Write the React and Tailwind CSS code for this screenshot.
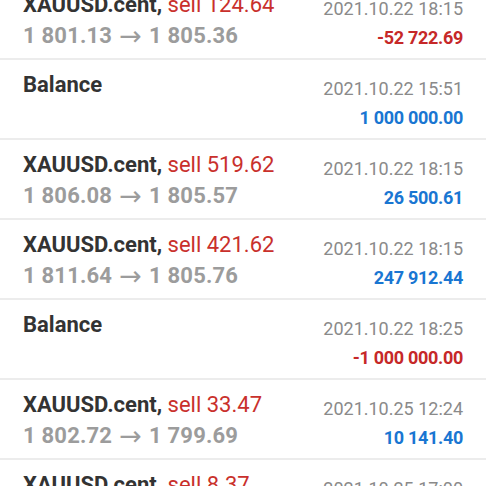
import React from 'react';

const rows = [
  { symbol: 'XAUUSD.cent', side: 'sell 124.64', from: '1 801.13', to: '1 805.36', date: '2021.10.22 18:15', amount: '-52 722.69' },
  { symbol: 'Balance', date: '2021.10.22 15:51', amount: '1 000 000.00' },
  { symbol: 'XAUUSD.cent', side: 'sell 519.62', from: '1 806.08', to: '1 805.57', date: '2021.10.22 18:15', amount: '26 500.61' },
  { symbol: 'XAUUSD.cent', side: 'sell 421.62', from: '1 811.64', to: '1 805.76', date: '2021.10.22 18:15', amount: '247 912.44' },
  { symbol: 'Balance', date: '2021.10.22 18:25', amount: '-1 000 000.00' },
  { symbol: 'XAUUSD.cent', side: 'sell 33.47', from: '1 802.72', to: '1 799.69', date: '2021.10.25 12:24', amount: '10 141.40' },
  { symbol: 'XAUUSD.cent', side: 'sell 8.37', from: '1 799.69', to: '1 798.50', date: '2021.10.25 17:00', amount: '2 540.12' },
];

function DealRow({ symbol, side, from, to, date, amount }) {
  const negative = amount.startsWith('-');
  return (
    <div className="h-[80px] shrink-0 border-b-2 border-[#ececec] px-[23px] flex justify-between">
      {/* left: symbol and prices */}
      <div className="pt-[9px]">
        <div className="text-[22px] leading-[31px] whitespace-nowrap">
          <span className="font-bold text-[#333333]">{symbol}</span>
          {side && <span className="text-[#333333] font-bold">, </span>}
          {side && <span className="text-[#c9302c]">{side}</span>}
        </div>
        {from && (
          <div className="h-[31px] flex items-center text-[22px] leading-[31px] tracking-[0.2px] font-bold text-[#9c9c9c] whitespace-nowrap">
            <span>{from}</span>
            <span
              className="mx-[7px] text-[27px] leading-none font-normal"
              style={{ fontFamily: '"DejaVu Sans", sans-serif' }}
            >
              →
            </span>
            <span>{to}</span>
          </div>
        )}
      </div>

      {/* right: date and profit */}
      <div className="pt-[14px] text-right">
        <div className="text-[18px] leading-[29px] text-[#8a8a8a] whitespace-nowrap">{date}</div>
        <div
          className={`text-[18px] leading-[29px] tracking-[-0.3px] font-bold whitespace-nowrap ${
            negative ? 'text-[#c62828]' : 'text-[#1976d2]'
          }`}
        >
          {amount}
        </div>
      </div>
    </div>
  );
}

export default function App() {
  return (
    <div
      className="w-[486px] h-[486px] overflow-hidden bg-white"
      style={{ fontFamily: 'Roboto, "Noto Sans", sans-serif' }}
    >
      <div className="-mt-[20px] flex flex-col">
        {rows.map((r, i) => (
          <DealRow key={i} {...r} />
        ))}
      </div>
    </div>
  );
}
